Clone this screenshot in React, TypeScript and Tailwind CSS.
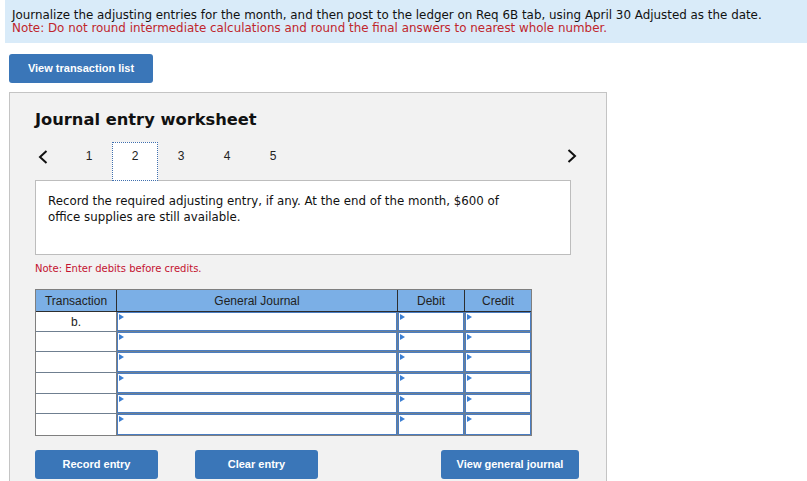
import React from "react";

const rowHeights = ["h-[20px]", "h-[20px]", "h-[21px]", "h-[21px]", "h-[20px]", "h-[21px]"];

function Flag() {
  return (
    <svg className="absolute left-[1px] top-[1px]" width="5" height="7" viewBox="0 0 5 7">
      <polygon points="0,0 5,3 0,6" fill="#3c7fd3" />
    </svg>
  );
}

function InputCell({ last }: { last?: boolean }) {
  return (
    <div className={last ? "h-full" : "h-full border-r border-[#6f7f90]"}>
      <div className="relative h-full border border-[#4a7dc2] bg-white">
        <Flag />
      </div>
    </div>
  );
}

export default function App() {
  return (
    <div className="w-[807px] h-[481px] overflow-hidden bg-white">
      <div className="ml-[5px] bg-[#d9ebf9] pl-[7px] pt-[9px] pb-[8px] font-['DejaVu_Sans',Verdana,sans-serif] text-[11.9px] leading-[13px]">
        <p className="text-[#111]">
          Journalize the adjusting entries for the month, and then post to the ledger on Req 6B tab, using April 30 Adjusted as the date.
        </p>
        <p className="text-[#c0262c]">
          Note: Do not round intermediate calculations and round the final answers to nearest whole number.
        </p>
      </div>

      <div className="ml-[9px] mt-[11px]">
        <button className="w-[144px] h-[29px] rounded-[3px] bg-[#3a76b8] text-white font-bold text-[11px] font-['Liberation_Sans',Arial,sans-serif]">
          View transaction list
        </button>
      </div>

      <div className="ml-[9px] mt-[9px] w-[598px] border border-[#c4c4c4] bg-[#f2f2f2] pl-[25px] pt-[17px] pb-[30px]">
        <h2 className="font-['DejaVu_Sans',Verdana,sans-serif] font-bold text-[16.3px] leading-[20px] text-[#111]">
          Journal entry worksheet
        </h2>

        <div className="mt-[12px] w-[542px] h-[38px] flex items-start font-['Liberation_Sans',Arial,sans-serif] text-[12px] text-[#222]">
          <div className="w-[31px] h-[38px] pt-[8px] pl-[3px]">
            <svg width="10" height="14" viewBox="0 0 10 14">
              <polyline points="8.5,1 2,7 8.5,13" fill="none" stroke="#111" strokeWidth="2" />
            </svg>
          </div>
          {["1", "2", "3", "4", "5"].map((t) =>
            t === "2" ? (
              <div
                key={t}
                className="relative z-10 w-[46px] h-[39px] bg-white border border-dotted border-[#3f6fae] flex justify-center pt-[6px] leading-[14px]"
              >
                {t}
              </div>
            ) : (
              <div key={t} className="w-[46px] h-[38px] flex justify-center pt-[7px] leading-[14px]">
                {t}
              </div>
            )
          )}
          <div className="ml-auto pt-[7px]">
            <svg width="10" height="14" viewBox="0 0 10 14">
              <polyline points="1.5,1 8,7 1.5,13" fill="none" stroke="#111" strokeWidth="2" />
            </svg>
          </div>
        </div>

        <div className="w-[536px] h-[75px] border border-[#bdbdbd] bg-white px-[12px] pt-[12px] font-['DejaVu_Sans',Verdana,sans-serif] text-[11.8px] leading-[16px] text-[#111]">
          Record the required adjusting entry, if any. At the end of the month, $600 of
          <br />
          office supplies are still available.
        </div>

        <p className="mt-[8px] font-['DejaVu_Sans',Verdana,sans-serif] text-[10px] leading-[12px] text-[#c41230]">
          Note: Enter debits before credits.
        </p>

        <div className="mt-[14px] w-[497px] border border-[#7f7f7f] bg-white font-['Liberation_Sans',Arial,sans-serif] text-[12px] text-[#222]">
          <div className="grid grid-cols-[81px_281px_67px_66px] h-[22px] bg-[#7bafe6] border-b border-[#2e2e2e]">
            <div className="border-r border-[#2e2e2e] flex items-center justify-center">Transaction</div>
            <div className="border-r border-[#2e2e2e] flex items-center justify-center">General Journal</div>
            <div className="border-r border-[#2e2e2e] flex items-center justify-center">Debit</div>
            <div className="flex items-center justify-center">Credit</div>
          </div>
          {rowHeights.map((h, i) => (
            <div
              key={i}
              className={
                i === rowHeights.length - 1
                  ? `grid grid-cols-[81px_281px_67px_66px] ${h}`
                  : `grid grid-cols-[81px_281px_67px_66px] ${h} border-b border-[#6f7f90]`
              }
            >
              <div className="border-r border-[#7f7f7f] flex items-center justify-center leading-[14px]">
                {i === 0 ? "b." : ""}
              </div>
              <InputCell />
              <InputCell />
              <InputCell last />
            </div>
          ))}
        </div>

        <div className="mt-[14px] w-[544px] flex gap-[37px] font-['Liberation_Sans',Arial,sans-serif] font-bold text-[11px] text-white">
          <button className="w-[123px] h-[29px] rounded-[3px] bg-[#3a76b8]">Record entry</button>
          <button className="w-[123px] h-[29px] rounded-[3px] bg-[#3a76b8]">Clear entry</button>
          <button className="ml-auto w-[138px] h-[29px] rounded-[3px] bg-[#3a76b8]">View general journal</button>
        </div>
      </div>
    </div>
  );
}
